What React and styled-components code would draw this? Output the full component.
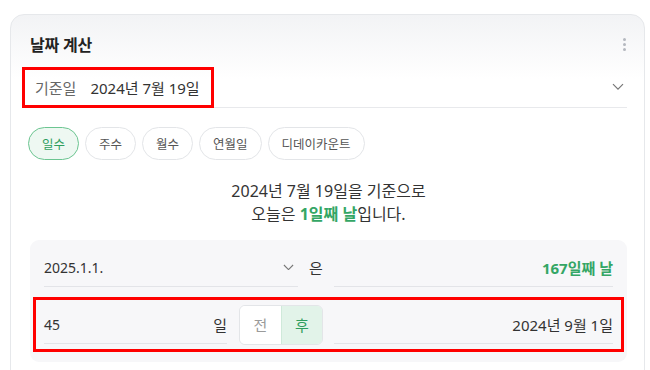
import React from "react";
import styled, { createGlobalStyle } from "styled-components";

const Global = createGlobalStyle`
  html, body { margin: 0; padding: 0; background: #fff; }
  body { font-family: "Noto Sans", "Noto Sans CJK KR", sans-serif; color: #333; }
  * { box-sizing: border-box; }
`;

const Page = styled.div`
  padding: 14px 5px 0 10px;
  height: 370px;
  overflow: hidden;
`;

const Card = styled.section`
  border: 1px solid #e6e8eb;
  border-radius: 14px;
  background: linear-gradient(#f2f3f5 0px, #ffffff 64px);
  padding: 14px 17px 20px 19px;
  height: 380px;
`;

const Header = styled.div`
  display: flex;
  align-items: center;
  justify-content: space-between;
  height: 30px;
`;

const Title = styled.h2`
  margin: 0;
  font-size: 16px;
  font-weight: 700;
  color: #222;
  letter-spacing: -0.2px;
`;

const Kebab = styled.div`
  display: flex;
  flex-direction: column;
  gap: 2px;
  margin-right: 1px;
  span {
    width: 3px;
    height: 3px;
    border-radius: 50%;
    background: #b4b8bf;
  }
`;

const DateRow = styled.div`
  display: flex;
  align-items: center;
  justify-content: space-between;
  height: 41px;
  margin-top: 8px;
  border-bottom: 1px solid #e8e9ec;
`;

const Highlight = styled.div`
  display: flex;
  align-items: center;
  border: 3px solid #f00;
  margin-left: -8px;
  height: 41px;
  padding: 0 11px 0 10px;
  gap: 14px;
  font-size: 15px;
`;

const Label = styled.span`
  color: #666;
`;

const Value = styled.span`
  color: #333;
`;

const Chevron = ({ size = 12 }) => (
  <svg width={size} height={size * 0.6} viewBox="0 0 12 7" fill="none">
    <path d="M1 1l5 5 5-5" stroke="#777" strokeWidth="1.2" />
  </svg>
);

const ChevronWrap = styled.span`
  display: flex;
  margin-right: ${(p) => p.$mr || 0}px;
`;

const Chips = styled.div`
  display: flex;
  gap: 6px;
  margin-top: 19px;
  margin-left: -2px;
`;

const Chip = styled.button`
  height: 33px;
  padding: 0 13px;
  border-radius: 17px;
  font-family: inherit;
  font-size: 12.5px;
  border: ${(p) => (p.$active ? "1.5px solid #6cc591" : "1px solid #e3e5e8")};
  background: ${(p) => (p.$active ? "#eef8f2" : "#fff")};
  color: ${(p) => (p.$active ? "#2f9e5e" : "#555")};
`;

const Summary = styled.p`
  margin: 20px 0 0;
  text-align: center;
  font-size: 16px;
  line-height: 23px;
  color: #333;
`;

const Green = styled.b`
  color: #34a665;
  font-weight: 700;
`;

const Panel = styled.div`
  margin-top: 14px;
  background: #f7f7f9;
  border-radius: 9px;
  padding: 8px 14px 10px 14px;
`;

const Row = styled.div`
  display: flex;
  align-items: center;
  height: 39px;
`;

const RowBox = styled(Row)`
  border: 3px solid #f00;
  margin: 10px -11px 0 -11px;
  padding: 0 8px 0 8px;
  height: 55px;
`;

const Field = styled.div`
  display: flex;
  align-items: center;
  height: 39px;
  border-bottom: 1px solid #e3e4e8;
  font-size: 15px;
  color: #333;
  flex: ${(p) => (p.$grow ? 1 : "none")};
  width: ${(p) => (p.$w ? `${p.$w}px` : "auto")};
  justify-content: ${(p) => (p.$right ? "flex-end" : "space-between")};
  align-self: ${(p) => (p.$low ? "flex-end" : "center")};
  margin-bottom: ${(p) => (p.$low ? 5 : 0)}px;
`;

const Digits = styled.span`
  font-size: 14px;
`;

const Connector = styled.span`
  width: 36px;
  text-align: center;
  font-size: 15px;
  color: #333;
`;

const Suffix = styled.span`
  margin-right: 0;
`;

const Segment = styled.div`
  display: flex;
  margin-left: 12px;
  margin-right: 11px;
  height: 40px;
  border: 1px solid #e3e5e8;
  border-radius: 6px;
  overflow: hidden;
`;

const SegBtn = styled.button`
  width: 41px;
  border: none;
  font-family: inherit;
  font-size: 15px;
  background: ${(p) => (p.$active ? "#e2f3e9" : "#fff")};
  color: ${(p) => (p.$active ? "#2f9e5e" : "#9a9a9a")};
  border-left: ${(p) => (p.$active ? "1px solid #cfe9da" : "none")};
`;

export default function App() {
  return (
    <Page>
      <Global />
      <Card>
        <Header>
          <Title>날짜 계산</Title>
          <Kebab>
            <span />
            <span />
            <span />
          </Kebab>
        </Header>
        <DateRow>
          <Highlight>
            <Label>기준일</Label>
            <Value>2024년 7월 19일</Value>
          </Highlight>
          <ChevronWrap $mr={3}>
            <Chevron />
          </ChevronWrap>
        </DateRow>
        <Chips>
          <Chip $active>일수</Chip>
          <Chip>주수</Chip>
          <Chip>월수</Chip>
          <Chip>연월일</Chip>
          <Chip>디데이카운트</Chip>
        </Chips>
        <Summary>
          2024년 7월 19일을 기준으로
          <br />
          오늘은 <Green>1일째 날</Green>입니다.
        </Summary>
        <Panel>
          <Row>
            <Field $grow>
              <Digits>2025.1.1.</Digits>
              <ChevronWrap $mr={4}>
                <Chevron size={11} />
              </ChevronWrap>
            </Field>
            <Connector>은</Connector>
            <Field $w={279} $right>
              <Green>167일째 날</Green>
            </Field>
          </Row>
          <RowBox>
            <Field $grow $low>
              <Digits>45</Digits>
              <Suffix>일</Suffix>
            </Field>
            <Segment>
              <SegBtn>전</SegBtn>
              <SegBtn $active>후</SegBtn>
            </Segment>
            <Field $w={279} $right $low>
              <span>2024년 9월 1일</span>
            </Field>
          </RowBox>
        </Panel>
      </Card>
    </Page>
  );
}
